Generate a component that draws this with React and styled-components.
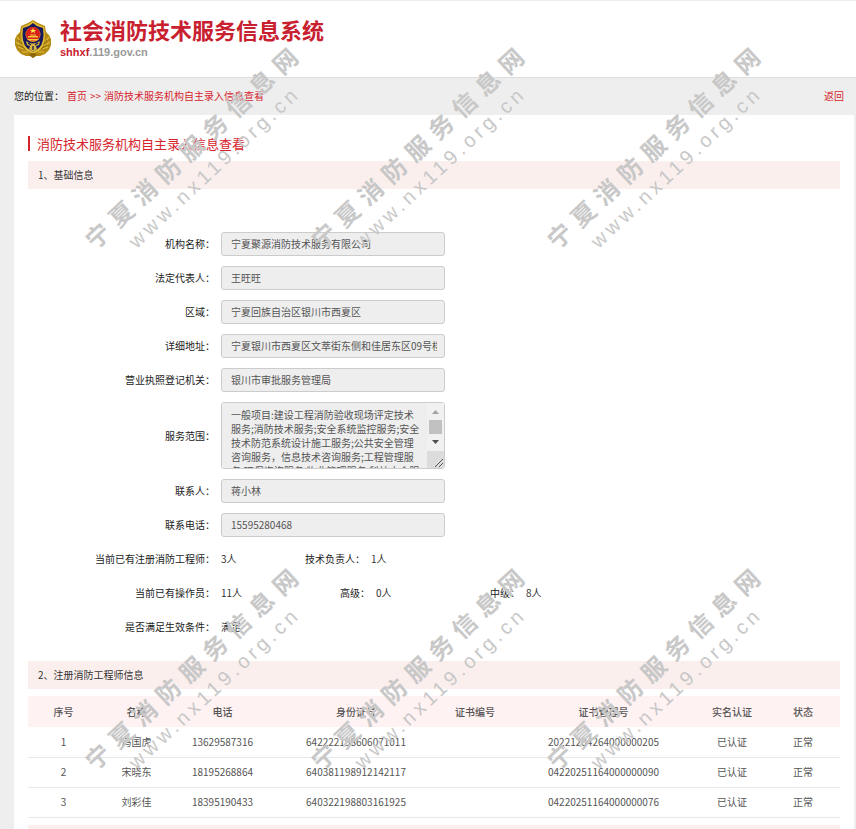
import React from "react";
import styled, { createGlobalStyle } from "styled-components";

const GlobalStyle = createGlobalStyle`
    * {
        box-sizing: border-box;
    }
    body {
        margin: 0;
        background: #eee;
        color: #333;
        font: 10px/14px "Noto Sans CJK SC", sans-serif;
    }
    input, textarea {
        font: inherit;
    }
    a {
        color: #d6242d;
        text-decoration: none;
    }
`;

const Page = styled.div`
    position: relative;
    min-height: 100vh;
    overflow: hidden;
`;

const Header = styled.header`
    display: flex;
    align-items: center;
    gap: 8px;
    height: 78px;
    padding: 0 14px;
    background: #fff;
    border-top: 1px solid #eee;
    border-bottom: 1px solid #ddd;
`;

const Brand = styled.div`
    display: flex;
    flex-direction: column;
    gap: 4px;
    padding-bottom: 2px;
`;

const SiteName = styled.h1`
    margin: 0;
    color: #c8202f;
    font-size: 22px;
    line-height: 24px;
    font-weight: 700;
`;

const SiteUrl = styled.div`
    color: #999;
    font: 700 11px/14px "Liberation Sans", sans-serif;

    b {
        color: #c8202f;
    }
`;

const Location = styled.nav`
    display: flex;
    align-items: center;
    gap: 3px;
    height: 37px;
    padding: 0 12px 2px 14px;
    color: #222;
`;

const BackLink = styled.a`
    margin-left: auto;
`;

const Card = styled.main`
    margin: 0 2px 0 14px;
    padding: 21px 14px 0;
    background: #fff;
`;

const CardTitle = styled.h2`
    margin: 0 0 10px;
    padding-left: 7px;
    border-left: 2px solid #d6242d;
    color: #d6242d;
    font-size: 13px;
    line-height: 15px;
    font-weight: 400;
`;

const SectionTitle = styled.h3`
    margin: 0;
    padding: 0 10px;
    min-height: 28px;
    background: #fbefee;
    font-size: 10px;
    line-height: 28px;
    font-weight: 400;
`;

const Form = styled.form`
    display: flex;
    flex-direction: column;
    gap: 10px;
    padding: 43px 0 22px;
`;

const Row = styled.div`
    display: flex;
    align-items: center;
    gap: 6px;
    min-height: 24px;
`;

const Label = styled.label`
    flex: none;
    width: ${(props) => props.$width || 187}px;
    text-align: right;
    color: #222;
`;

const TextInput = styled.input`
    width: 224px;
    height: 24px;
    padding: 0 7px 2px 9px;
    border: 1px solid #ccc;
    border-radius: 3px;
    background: #eee;
    color: #555;
`;

const TextAreaBox = styled.div`
    position: relative;
    width: 224px;
    height: 67px;
`;

const TextArea = styled.textarea`
    display: block;
    width: 100%;
    height: 100%;
    padding: 5px 23px 5px 9px;
    border: 1px solid #ccc;
    border-radius: 3px;
    background: #eee;
    color: #555;
    resize: none;
    scrollbar-width: none;
`;

const ScrollTrack = styled.svg`
    position: absolute;
    top: 1px;
    right: 1px;
    pointer-events: none;
`;

const Value = styled.output`
    width: 58px;
`;

const Table = styled.table`
    width: 100%;
    margin: 7px 0;
    border-collapse: collapse;
    table-layout: fixed;
    text-align: center;
    color: #555;

    th {
        height: 31px;
        padding: 0;
        background: #fff2f2;
        font-weight: 500;
    }
    td {
        height: 30px;
        padding: 0;
        border-bottom: 1px solid #e8e8e8;
    }
`;

const Mark = styled.div`
    position: absolute;
    left: ${(props) => props.$left}px;
    top: ${(props) => props.$top}px;
    width: 290px;
    transform: rotate(-43deg);
    color: #c8c8c8;
    font-size: 24px;
    line-height: 31px;
    font-weight: 700;
    letter-spacing: 8px;
    text-align: center;
    white-space: nowrap;
    pointer-events: none;
    user-select: none;
`;

const MarkUrl = styled.div`
    font: 400 20px/31px "Liberation Sans", sans-serif;
    letter-spacing: 4px;
`;

const basics = [
    { id: "orgName", label: "机构名称", value: "宁夏聚源消防技术服务有限公司" },
    { id: "legal", label: "法定代表人", value: "王旺旺" },
    { id: "region", label: "区域", value: "宁夏回族自治区银川市西夏区" },
    { id: "address", label: "详细地址", value: "宁夏银川市西夏区文萃街东侧和佳居东区09号楼" },
    { id: "licence", label: "营业执照登记机关", value: "银川市审批服务管理局" },
    {
        id: "scope",
        label: "服务范围",
        multiline: true,
        value: "一般项目:建设工程消防验收现场评定技术服务;消防技术服务;安全系统监控服务;安全技术防范系统设计施工服务;公共安全管理咨询服务，信息技术咨询服务;工程管理服务;环保咨询服务;物业管理服务;科技中介服务;消防器材销售;安全咨询服务。",
    },
    { id: "contact", label: "联系人", value: "蒋小林" },
    { id: "phone", label: "联系电话", value: "15595280468" },
];

const stats = [
    [
        { label: "当前已有注册消防工程师", value: "3人" },
        { label: "技术负责人", value: "1人", width: 80 },
    ],
    [
        { label: "当前已有操作员", value: "11人" },
        { label: "高级", value: "0人", width: 85 },
        { label: "中级", value: "8人", width: 80 },
    ],
    [{ label: "是否满足生效条件", value: "满足" }],
];

const columns = [
    { name: "序号", width: 71 },
    { name: "名称", width: 75 },
    { name: "电话", width: 97 },
    { name: "身份证号", width: 170 },
    { name: "证书编号", width: 68 },
    { name: "证书管理号", width: 189 },
    { name: "实名认证", width: 68 },
    { name: "状态", width: 74 },
];

const engineers = [
    ["1", "冯国虎", "13629587316", "642222198606071011", "", "20221204264000000205", "已认证", "正常"],
    ["2", "宋晓东", "18195268864", "640381198912142117", "", "04220251164000000090", "已认证", "正常"],
    ["3", "刘彩佳", "18395190433", "640322198803161925", "", "04220251164000000076", "已认证", "正常"],
];

const marks = [
    [59, 125], [285, 125], [521, 125],
    [59, 646], [285, 646], [521, 646],
];

const Emblem = () => (
    <svg width="38" height="40" viewBox="0 0 38 40" aria-hidden="true">
        {/* wreath */}
        <path d="M19 1 24 4 31 7 32 13 35 16 37 20 37 26 35 31 31 35 26 37 22 37 19 39 16 37 12 37 7 35 3 31 1 26 1 20 3 16 6 13 7 7 14 4Z" fill="#b58a14" />
        <path d="M3 18 7 23M2 23 8 27M4 28 10 30M8 33 14 33M35 18 31 23M36 23 30 27M34 28 28 30M30 33 24 33" stroke="#e0bd3c" strokeWidth="1.2" />
        <path d="M5 21 9 26M5 26 11 30M33 21 29 26M33 26 27 30" stroke="#7d5a08" strokeWidth="0.8" />
        {/* shield */}
        <path d="M19 2 23 5 30 8Q33 24 26 31L19 35 12 31Q5 24 8 8L15 5Z" fill="#e2bd34" />
        <path d="M19 4 23 7 29 9Q31 23 25 29L19 33 13 29Q7 23 9 9L15 7Z" fill="#17195c" />
        <path d="M12 22Q19 27 26 22L25 26 22 27 23 30 19 33 15 30 16 27 13 26Z" fill="#d9b640" />
        <path d="M14 24 17 26M24 24 21 26M19 27V31" stroke="#17195c" strokeWidth="1.3" />
        {/* national emblem */}
        <circle cx="19" cy="15.500" r="7.500" fill="#e0882b" />
        <circle cx="19" cy="15" r="7" fill="#d81e1a" />
        <path d="M19 9 20 11H22L20.500 12.300 21 14 19 13 17 14 17.500 12.300 16 11H18Z" fill="#ffe14d" />
        <path d="M14 17H24V18.500H14ZM16 15.500H22V16.500H16ZM13 20H25L23 21.500H15Z" fill="#f3c93b" />
        <path d="M15 36 17 34H21L23 36 19 39Z" fill="#8f680c" />
    </svg>
);

const ScrollBar = () => (
    <ScrollTrack width="17" height="65" viewBox="0 0 17 65" aria-hidden="true">
        <rect width="17" height="48" fill="#f1f1f1" />
        <path d="M5 11 8.500 7 12 11Z" fill="#a3a3a3" />
        <rect x="2" y="17" width="13" height="14" fill="#c1c1c1" />
        <path d="M5 37H12L8.500 41Z" fill="#505050" />
        <rect y="48" width="17" height="17" fill="#dcdcdc" />
        <path d="M8 64 16 56M12 64 16 60" stroke="#555" />
    </ScrollTrack>
);

const App = () => {
    return (
        <Page>
            <GlobalStyle />
            <Header>
                <Emblem />
                <Brand>
                    <SiteName>社会消防技术服务信息系统</SiteName>
                    <SiteUrl><b>shhxf</b>.119.gov.cn</SiteUrl>
                </Brand>
            </Header>
            <Location>
                <span>您的位置：</span>
                <a href="#home">首页</a>
                <a href="#home">&gt;&gt;</a>
                <a href="#view">消防技术服务机构自主录入信息查看</a>
                <BackLink href="#back">返回</BackLink>
            </Location>
            <Card>
                <CardTitle>消防技术服务机构自主录入信息查看</CardTitle>
                <SectionTitle>1、基础信息</SectionTitle>
                <Form>
                    {basics.map((item) => (
                        <Row key={item.id}>
                            <Label htmlFor={item.id}>{item.label}：</Label>
                            {item.multiline ? (
                                <TextAreaBox>
                                    <TextArea id={item.id} readOnly defaultValue={item.value} />
                                    <ScrollBar />
                                </TextAreaBox>
                            ) : (
                                <TextInput id={item.id} readOnly defaultValue={item.value} />
                            )}
                        </Row>
                    ))}
                    {stats.map((row, i) => (
                        <Row key={i}>
                            {row.map((item, j) => (
                                <React.Fragment key={item.label}>
                                    <Label htmlFor={`stat${i}${j}`} $width={item.width}>{item.label}：</Label>
                                    <Value id={`stat${i}${j}`}>{item.value}</Value>
                                </React.Fragment>
                            ))}
                        </Row>
                    ))}
                </Form>
                <SectionTitle>2、注册消防工程师信息</SectionTitle>
                <Table>
                    <colgroup>
                        {columns.map((col) => <col key={col.name} style={{ width: `${col.width / 8.12}%` }} />)}
                    </colgroup>
                    <thead>
                        <tr>{columns.map((col) => <th key={col.name} scope="col">{col.name}</th>)}</tr>
                    </thead>
                    <tbody>
                        {engineers.map((row) => (
                            <tr key={row[0]}>{row.map((cell, i) => <td key={i}>{cell}</td>)}</tr>
                        ))}
                    </tbody>
                </Table>
                <SectionTitle as="div" />
            </Card>
            {marks.map(([left, top]) => (
                <Mark key={`${left}-${top}`} $left={left} $top={top} aria-hidden="true">
                    宁夏消防服务信息网
                    <MarkUrl>www.nx119.org.cn</MarkUrl>
                </Mark>
            ))}
        </Page>
    );
};

export default App;
